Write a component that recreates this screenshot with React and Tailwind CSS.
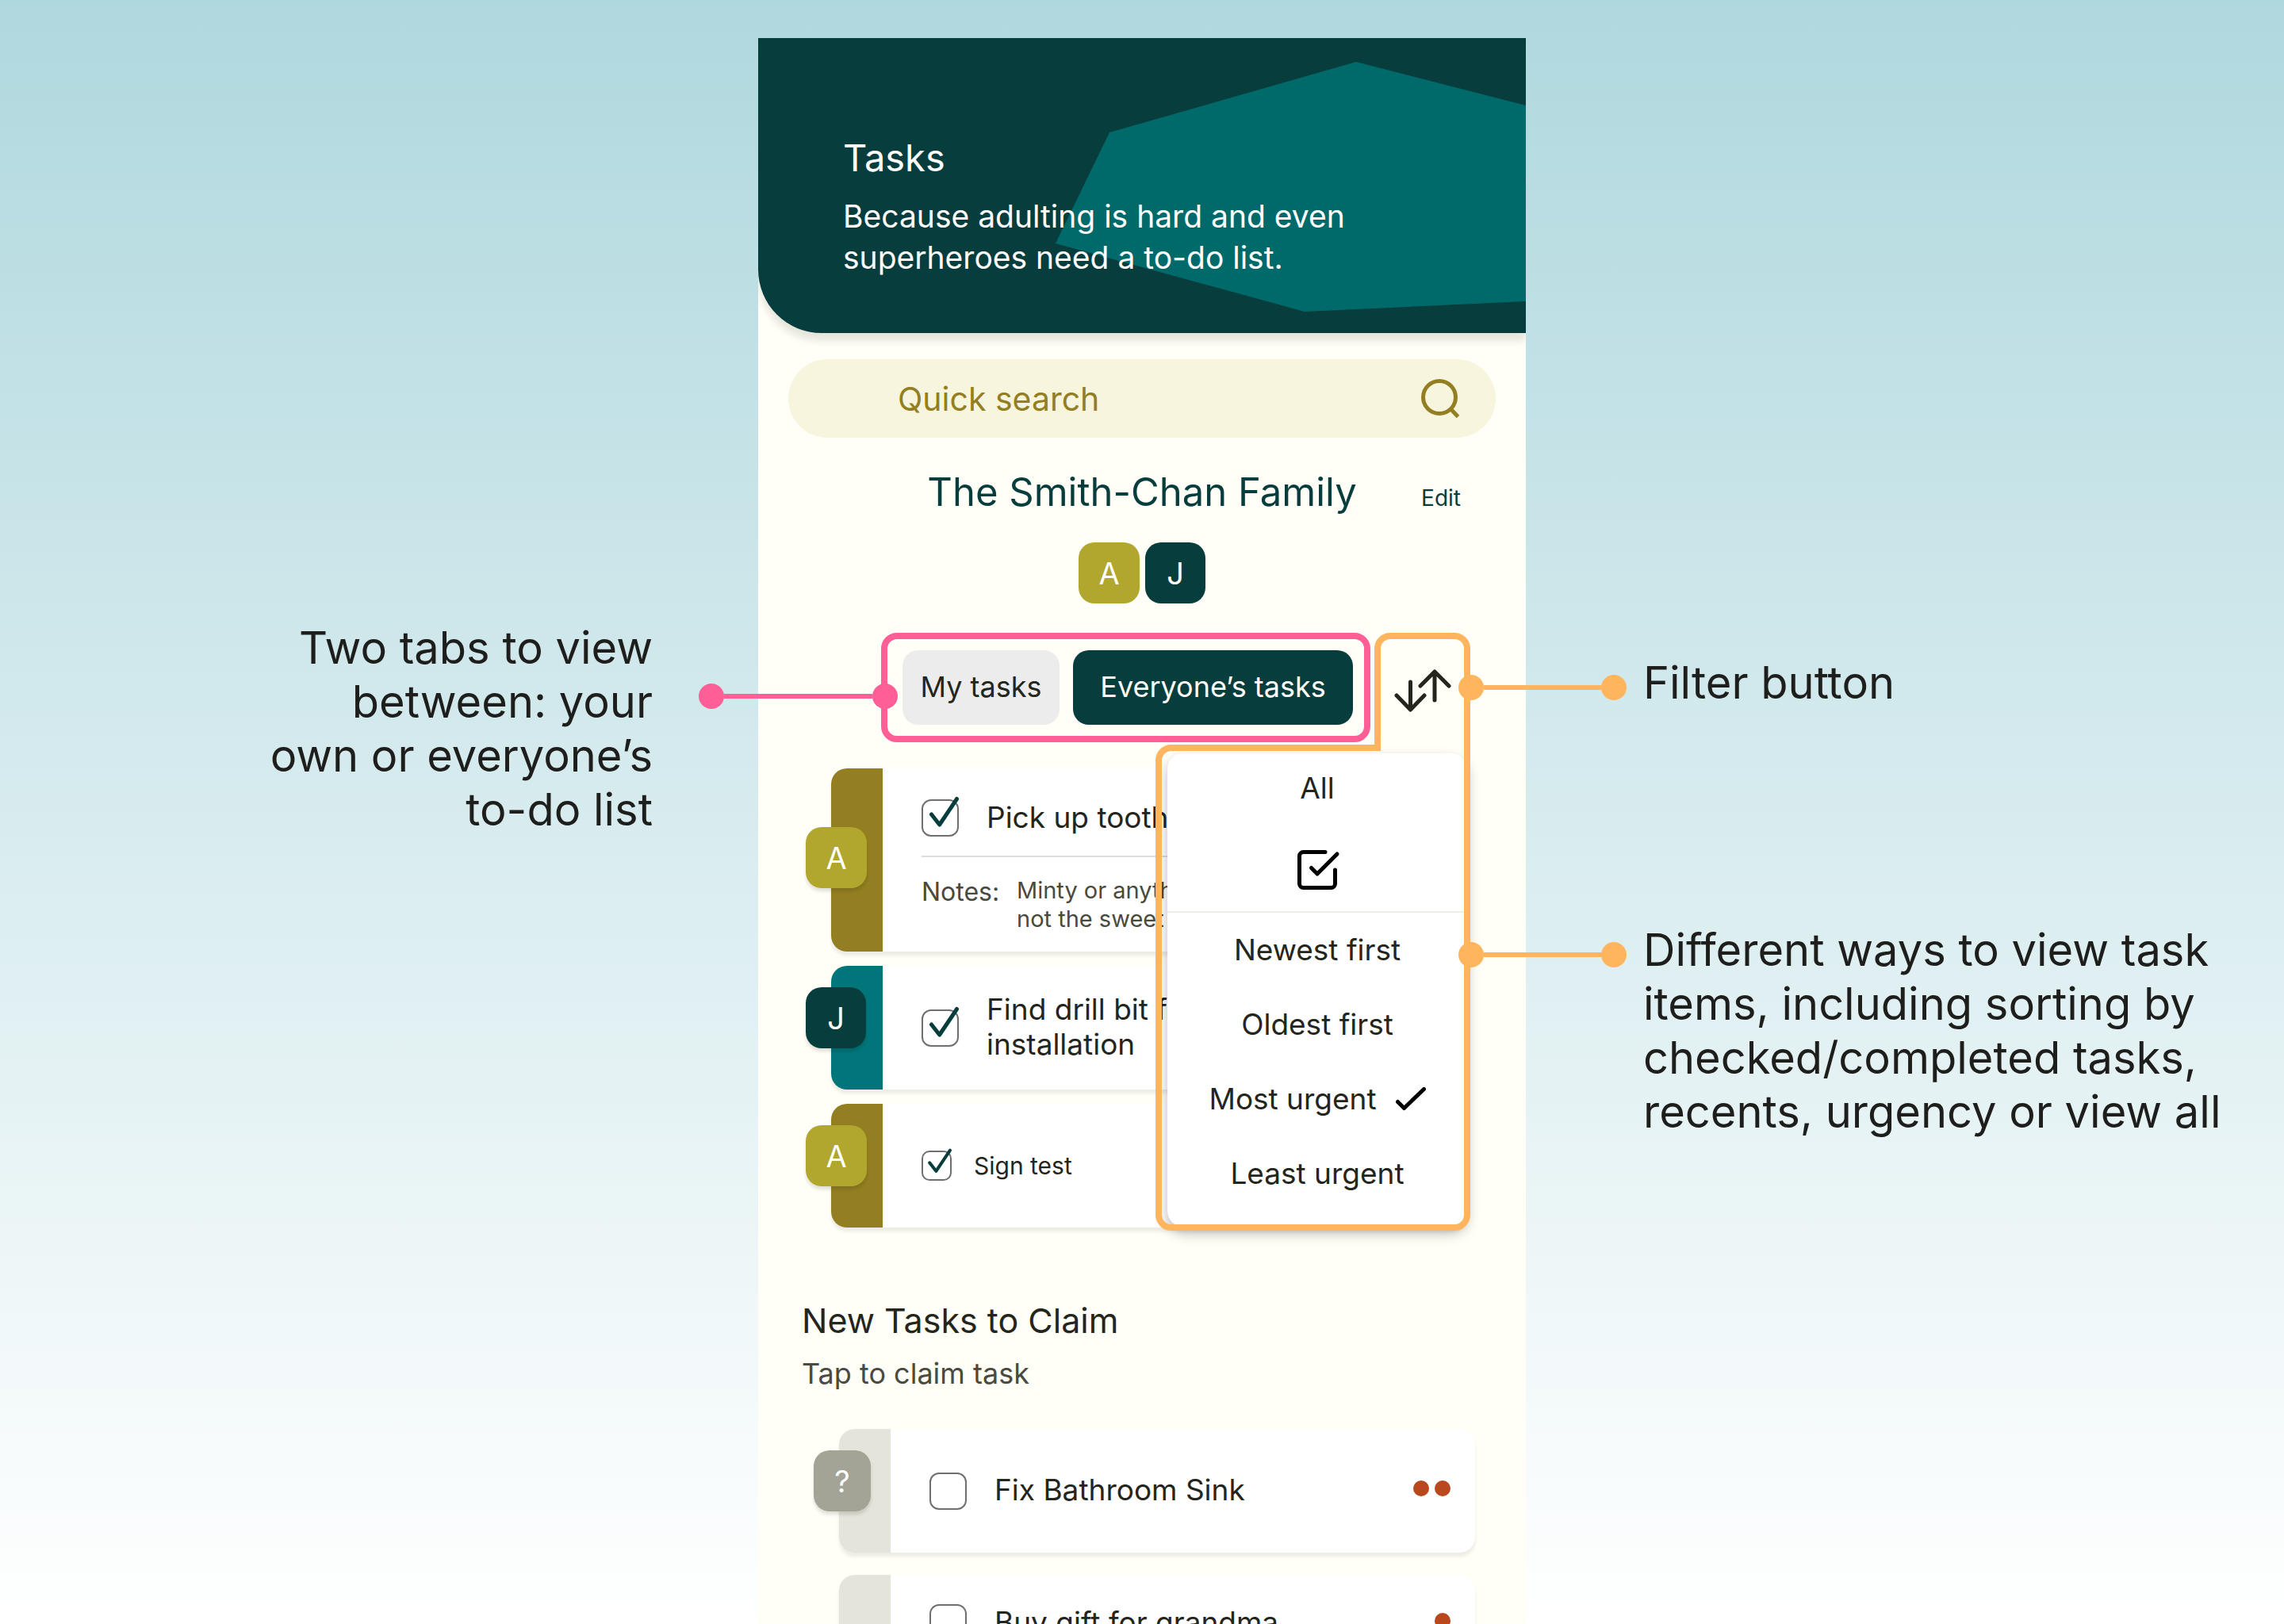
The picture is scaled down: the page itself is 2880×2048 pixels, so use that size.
import React, { useState } from "react";

const avatarTones = {
  olive: "w-[77px] bg-[#b1a62e]",
  teal: "w-[76px] bg-[#083d3d]",
  grey: "w-[72px] bg-[#a3a396]",
};

const bandTones = {
  olive: "bg-[#937f22]",
  teal: "bg-[#00767a]",
  grey: "bg-[#e4e4da]",
};

function Avatar({ letter, tone }) {
  return (
    <span
      className={`flex h-[77px] items-center justify-center rounded-[20px] text-[38px] leading-none text-white ${avatarTones[tone]}`}
    >
      {letter}
    </span>
  );
}

function TaskCheckbox({ id, checked, small, onChange }) {
  return (
    <span className={`relative block shrink-0 ${small ? "size-[38px]" : "size-[47px]"}`}>
      <input
        id={id}
        type="checkbox"
        checked={checked}
        onChange={onChange}
        className={`block size-full appearance-none border-2 border-[#6f6f6f] bg-white ${small ? "rounded-[10px]" : "rounded-[12px]"}`}
      />
      {checked && (
        <svg
          viewBox="0 0 47 47"
          className="pointer-events-none absolute inset-0 size-full overflow-visible"
          fill="none"
          stroke="#083d3d"
          strokeWidth="5"
          strokeLinecap="round"
          strokeLinejoin="round"
          aria-hidden="true"
        >
          <path d="M12.5 19 22.7 32 44.5 -.5" />
        </svg>
      )}
    </span>
  );
}

function TaskCard({ id, letter, tone, tall, small, short, text, notes, urgency = 0, done }) {
  const [checked, setChecked] = useState(Boolean(done));
  return (
    <li className="relative flex rounded-[20px] bg-white shadow-[0_5px_4px_rgba(0,0,0,0.08)]">
      <span className={`w-[65px] shrink-0 rounded-l-[20px] ${bandTones[tone]}`} />
      {letter && (
        <span
          className={`absolute left-[-32px] rounded-[20px] shadow-[0_4px_4px_rgba(0,0,0,0.12)] ${tall ? "top-[74px]" : "top-[27px]"}`}
        >
          <Avatar letter={letter} tone={tone} />
        </span>
      )}
      <div
        className={`flex flex-1 flex-col pl-[49px] ${
          notes ? "pt-[39px] pb-[23px]" : short ? "h-[121px] justify-center" : "h-[156px] justify-center"
        }`}
      >
        <div className={`flex items-center pr-[31px] ${small ? "gap-[28px]" : "gap-[35px]"} ${notes ? "h-[47px]" : ""}`}>
          <TaskCheckbox id={id} checked={checked} small={small} onChange={() => setChecked(!checked)} />
          <label
            htmlFor={id}
            className={`flex-1 whitespace-pre-line ${small ? "text-[30px] leading-[36px]" : "pb-[2px] text-[37px] leading-[44px]"}`}
          >
            {text}
          </label>
          {urgency > 0 && (
            <span className="flex gap-[7px] pb-[6px]" role="img" aria-label="Urgency">
              {Array.from({ length: urgency }, (_, i) => (
                <span key={i} className="size-[20px] rounded-full bg-[#ba481f]" />
              ))}
            </span>
          )}
        </div>
        {notes && (
          <div className="mt-[24px] flex border-t-2 border-[#dddddd] pt-[24px] text-[#494a3e]">
            <span className="w-[120px] text-[32px] leading-[40px]">Notes:</span>
            <p className="text-[29px] leading-[36px] whitespace-pre-line">{notes}</p>
          </div>
        )}
      </div>
    </li>
  );
}

function Dot({ className }) {
  return <span className={`size-[32px] shrink-0 rounded-full ${className}`} />;
}

function MenuItem({ children, className = "h-[94px]" }) {
  return (
    <button type="button" role="menuitem" className={`flex w-full items-center justify-center gap-[24px] ${className}`}>
      {children}
    </button>
  );
}

function FilterMenu() {
  return (
    <div
      role="menu"
      className="absolute top-full right-0 z-10 mt-[14px] w-[378px] rounded-[20px] bg-white pb-[20px] text-[37px] leading-[44px] shadow-[0_8px_16px_rgba(0,0,0,0.28)]"
    >
      <MenuItem className="h-[88px]">All</MenuItem>
      <MenuItem className="h-[111px] pt-[6px]">
        <svg
          viewBox="0 0 24 24"
          className="size-[60px]"
          fill="none"
          stroke="#000"
          strokeWidth="2"
          strokeLinecap="round"
          strokeLinejoin="round"
          role="img"
          aria-label="Completed"
        >
          <path d="M9 11l3 3L22 4" />
          <path d="M21 12v7a2 2 0 0 1-2 2H5a2 2 0 0 1-2-2V5a2 2 0 0 1 2-2h11" />
        </svg>
      </MenuItem>
      <hr className="border-t-2 border-[#efefe4]" />
      <MenuItem>Newest first</MenuItem>
      <MenuItem>Oldest first</MenuItem>
      <MenuItem>
        Most urgent
        <svg
          viewBox="0 0 38 30"
          className="h-[30px] w-[38px]"
          fill="none"
          stroke="#000"
          strokeWidth="5"
          strokeLinecap="round"
          strokeLinejoin="round"
          aria-hidden="true"
        >
          <path d="M2.5 18.5 10.5 26.5 35.5 2.5" />
        </svg>
      </MenuItem>
      <MenuItem>Least urgent</MenuItem>
    </div>
  );
}

function Connector({ className, color }) {
  return (
    <span className={`pointer-events-none absolute z-20 flex items-center ${className}`}>
      <Dot className={color} />
      <span className={`h-[6px] flex-1 ${color}`} />
      <Dot className={color} />
    </span>
  );
}

function FilterCallout() {
  return (
    <>
      <svg
        viewBox="0 0 397 754"
        className="pointer-events-none absolute top-0 right-[-4px] z-20 h-[754px] w-[397px]"
        fill="none"
        stroke="#ffb55e"
        strokeWidth="8"
        aria-hidden="true"
      >
        <path d="M280 145V20a16 16 0 0 1 16-16H377a16 16 0 0 1 16 16V734a16 16 0 0 1-16 16H20a16 16 0 0 1-16-16V161a16 16 0 0 1 16-16H284" />
      </svg>
      <Connector className="top-[53px] left-[102px] w-[212px]" color="bg-[#ffb55e]" />
      <Connector className="top-[390px] left-[102px] w-[212px]" color="bg-[#ffb55e]" />
    </>
  );
}

function Header() {
  return (
    <header className="relative overflow-hidden rounded-bl-[80px] bg-[#083d3d] text-white">
      <svg
        viewBox="0 0 593 315"
        className="absolute top-[30px] right-0 h-[315px] w-[593px]"
        fill="#006a6b"
        aria-hidden="true"
      >
        <path d="M379 0 593 55V302L314 315 0 229 68 89Z" />
      </svg>
      <div className="relative px-[107px] pt-[123px] pb-[69px]">
        <h1 className="text-[47px] leading-[56px]">Tasks</h1>
        <p className="mt-[20px] text-[39px] leading-[52px]">
          Because adulting is hard and even
          <br />
          superheroes need a to-do list.
        </p>
      </div>
    </header>
  );
}

function Phone() {
  return (
    <main className="bg-[#fffff7] text-[#24251c]">
      <div className="rounded-bl-[80px] shadow-[0_10px_10px_rgba(0,0,0,0.1)] [clip-path:inset(0_0_-40px_0)]">
        <Header />
      </div>

      <form
        className="mx-[38px] mt-[33px] flex h-[99px] items-center rounded-full bg-[#f7f5dd] pr-[44px] pl-[138px] text-[#937f22]"
        onSubmit={(e) => e.preventDefault()}
      >
        <input
          type="text"
          aria-label="Quick search"
          placeholder="Quick search"
          className="min-w-0 flex-1 bg-transparent text-[41px] leading-[48px] outline-none placeholder:text-[#937f22] placeholder:opacity-100"
        />
        <button type="submit" aria-label="Search">
          <svg viewBox="0 0 52 52" className="size-[52px]" fill="none" stroke="currentColor" strokeWidth="5" aria-hidden="true">
            <circle cx="25" cy="24" r="20.5" />
            <path d="M38.5 38 48.5 48.5" />
          </svg>
        </button>
      </form>

      <div className="mt-[39px] grid grid-cols-[1fr_auto_1fr] items-baseline text-[#083d3d]">
        <h2 className="col-start-2 text-[49px] leading-[60px]">The Smith-Chan Family</h2>
        <button type="button" className="mr-[82px] justify-self-end pb-[2px] text-[28px] leading-[36px]">
          Edit
        </button>
      </div>

      <div className="mt-[33px] flex justify-center gap-[7px]">
        <Avatar letter="A" tone="olive" />
        <Avatar letter="J" tone="teal" />
      </div>

      <div className="mt-[37px] flex pl-[155px]">
        <div
          role="tablist"
          className="relative flex gap-[17px] rounded-[20px] border-8 border-[#ff5f96] py-[14px] pr-[14px] pl-[19px] text-[36px] leading-[44px]"
        >
          <button type="button" role="tab" aria-selected="false" className="h-[94px] w-[198px] rounded-[20px] bg-[#ececec] pb-[2px]">
            My tasks
          </button>
          <button
            type="button"
            role="tab"
            aria-selected="true"
            className="h-[94px] w-[353px] rounded-[20px] bg-[#083d3d] pb-[2px] text-white"
          >
            Everyone’s tasks
          </button>
          <Connector className="top-[56px] left-[-238px] w-[251px]" color="bg-[#ff5f96]" />
        </div>
        <div className="relative ml-[9px] w-[113px]">
          <button type="button" aria-label="Filter" aria-haspopup="menu" className="flex size-full items-center justify-center pt-[8px]">
            <svg
              viewBox="0 0 72 54"
              className="h-[54px] w-[72px]"
              fill="none"
              stroke="#24251c"
              strokeWidth="5"
              strokeLinecap="round"
              strokeLinejoin="round"
              aria-hidden="true"
            >
              <path d="M20.5 16V50M3 33 20.5 51 38 33" />
              <path d="M51 39V3M33 21 51 3 69 21" />
            </svg>
          </button>
          <FilterMenu />
          <FilterCallout />
        </div>
      </div>

      <ul className="mt-[33px] mr-[74px] ml-[92px] flex flex-col gap-[18px]">
        <TaskCard id="toothpaste" letter="A" tone="olive" tall done text="Pick up toothpaste" notes={"Minty or anything\nnot the sweet"} />
        <TaskCard id="drill" letter="J" tone="teal" done text={"Find drill bit for\ninstallation"} />
        <TaskCard id="test" letter="A" tone="olive" small done text="Sign test" />
      </ul>

      <h2 className="mt-[92px] ml-[55px] text-[43px] leading-[50px]">New Tasks to Claim</h2>
      <p className="mt-[20px] ml-[55px] text-[36px] leading-[44px] text-[#4a4a40]">Tap to claim task</p>
      <ul className="mt-[48px] mr-[64px] ml-[102px] flex flex-col gap-[28px]">
        <TaskCard id="sink" letter="?" tone="grey" text="Fix Bathroom Sink" urgency={2} />
        <TaskCard id="gift" tone="grey" short text="Buy gift for grandma" urgency={1} />
      </ul>
    </main>
  );
}

export default function App() {
  return (
    <div className="grid h-screen grid-cols-[956fr_968fr_956fr] overflow-hidden bg-linear-to-b from-[#afd8de] to-white pt-[48px] font-[Inter,sans-serif] text-[#24251c]">
      <aside className="pt-[735px] pr-[133px] text-right text-[56px] leading-[68px] text-[#1e1e1c]">
        <p>
          Two tabs to view
          <br />
          between: your
          <br />
          own or everyone’s
          <br />
          to-do list
        </p>
      </aside>
      <Phone />
      <aside className="pt-[779px] pl-[148px] text-[56px] leading-[68px] text-[#1e1e1c]">
        <p>Filter button</p>
        <p className="mt-[269px]">
          Different ways to view task
          <br />
          items, including sorting by
          <br />
          checked/completed tasks,
          <br />
          recents, urgency or view all
        </p>
      </aside>
    </div>
  );
}
